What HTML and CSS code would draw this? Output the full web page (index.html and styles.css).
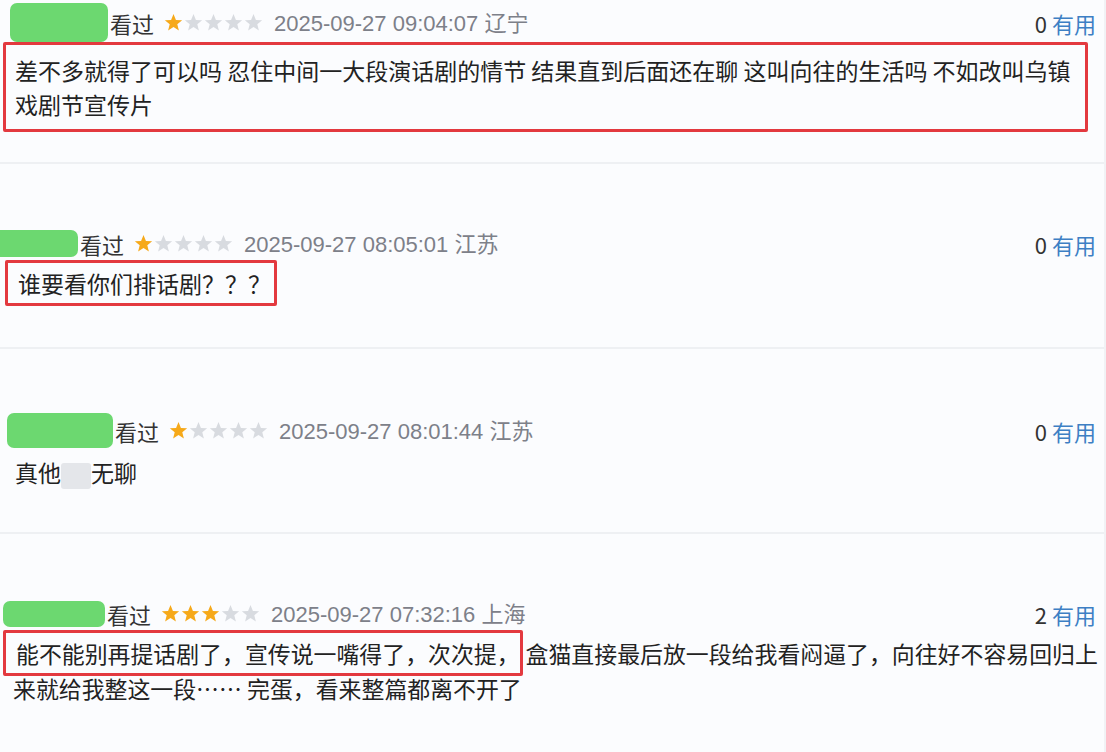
FILE: index.html
```html
<!DOCTYPE html>
<html lang="zh-CN">

<head>
    <meta charset="UTF-8">
    <meta name="viewport" content="width=device-width, initial-scale=1.0">
    <title>短评</title>
    <link rel="stylesheet" href="styles.css">
</head>

<body>
    <svg width="0" height="0" class="defs">
        <defs>
            <polygon id="star" points="9,1 11.3,6.6 17.2,6.9 12.6,10.7 14.1,16.5 9,13.3 3.9,16.5 5.4,10.7 0.8,6.9 6.7,6.6" />
        </defs>
    </svg>

    <div class="comments">
        <div class="comment comment-first">
            <div class="comment-head">
                <span class="user user-1"></span>
                <span class="seen">看过</span>
                <span class="stars">
                    <svg class="star on" viewBox="0 0 18 18"><use href="#star" /></svg>
                    <svg class="star" viewBox="0 0 18 18"><use href="#star" /></svg>
                    <svg class="star" viewBox="0 0 18 18"><use href="#star" /></svg>
                    <svg class="star" viewBox="0 0 18 18"><use href="#star" /></svg>
                    <svg class="star" viewBox="0 0 18 18"><use href="#star" /></svg>
                </span>
                <span class="time">2025-09-27 09:04:07 <span class="place">辽宁</span></span>
                <span class="votes"><span class="count">0</span> <a href="#">有用</a></span>
            </div>
            <p class="comment-text mark mark-block">差不多就得了可以吗 忍住中间一大段演话剧的情节 结果直到后面还在聊 这叫向往的生活吗 不如改叫乌镇戏剧节宣传片</p>
        </div>

        <div class="comment">
            <div class="comment-head">
                <span class="user user-2"></span>
                <span class="seen">看过</span>
                <span class="stars">
                    <svg class="star on" viewBox="0 0 18 18"><use href="#star" /></svg>
                    <svg class="star" viewBox="0 0 18 18"><use href="#star" /></svg>
                    <svg class="star" viewBox="0 0 18 18"><use href="#star" /></svg>
                    <svg class="star" viewBox="0 0 18 18"><use href="#star" /></svg>
                    <svg class="star" viewBox="0 0 18 18"><use href="#star" /></svg>
                </span>
                <span class="time">2025-09-27 08:05:01 <span class="place">江苏</span></span>
                <span class="votes"><span class="count">0</span> <a href="#">有用</a></span>
            </div>
            <p class="comment-text"><span class="mark">谁要看你们排话剧？？？</span></p>
        </div>

        <div class="comment">
            <div class="comment-head">
                <span class="user user-3"></span>
                <span class="seen">看过</span>
                <span class="stars">
                    <svg class="star on" viewBox="0 0 18 18"><use href="#star" /></svg>
                    <svg class="star" viewBox="0 0 18 18"><use href="#star" /></svg>
                    <svg class="star" viewBox="0 0 18 18"><use href="#star" /></svg>
                    <svg class="star" viewBox="0 0 18 18"><use href="#star" /></svg>
                    <svg class="star" viewBox="0 0 18 18"><use href="#star" /></svg>
                </span>
                <span class="time">2025-09-27 08:01:44 <span class="place">江苏</span></span>
                <span class="votes"><span class="count">0</span> <a href="#">有用</a></span>
            </div>
            <p class="comment-text">真他<span class="blur"></span>无聊</p>
        </div>

        <div class="comment comment-last">
            <div class="comment-head">
                <span class="user user-4"></span>
                <span class="seen">看过</span>
                <span class="stars">
                    <svg class="star on" viewBox="0 0 18 18"><use href="#star" /></svg>
                    <svg class="star on" viewBox="0 0 18 18"><use href="#star" /></svg>
                    <svg class="star on" viewBox="0 0 18 18"><use href="#star" /></svg>
                    <svg class="star" viewBox="0 0 18 18"><use href="#star" /></svg>
                    <svg class="star" viewBox="0 0 18 18"><use href="#star" /></svg>
                </span>
                <span class="time">2025-09-27 07:32:16 <span class="place">上海</span></span>
                <span class="votes"><span class="count">2</span> <a href="#">有用</a></span>
            </div>
            <p class="comment-text comment-long"><span class="mark mark-tight">能不能别再提话剧了，宣传说一嘴得了，次次提，</span>盒猫直接最后放一段给我看闷逼了，向往好不容易回归上来就给我整这一段…… 完蛋，看来整篇都离不开了</p>
        </div>
    </div>
</body>

</html>
```

FILE: styles.css
```css
body {
    margin: 0;
    padding: 0;
    background-color: #fbfcfe;
    font-family: "Noto Sans CJK SC", "Noto Sans", sans-serif;
    color: #222;
}

.defs {
    position: absolute;
}

.comments {
    border-right: 2px solid #f1f2f5;
    height: 752px;
    overflow: hidden;
}

.comment {
    height: 185px;
    padding-top: 64px;
    box-sizing: border-box;
    border-bottom: 2px solid #eef0f3;
}

.comment-first {
    height: 164px;
    padding-top: 3px;
}

.comment-last {
    border-bottom: none;
}

.comment-head {
    display: flex;
    align-items: center;
    padding-right: 8px;
    font-size: 22px;
    line-height: 28px;
}

.user {
    display: inline-block;
    background-color: #6cd870;
    border-radius: 7px;
    margin-right: 2px;
}

.user-1 {
    width: 98px;
    height: 39px;
    margin-left: 10px;
}

.user-2 {
    width: 78px;
    height: 27px;
    margin-left: 0;
    border-radius: 0 7px 7px 0;
}

.user-3 {
    width: 106px;
    height: 35px;
    margin-left: 7px;
}

.user-4 {
    width: 102px;
    height: 26px;
    margin-left: 3px;
}

.seen {
    color: #333;
}

.stars {
    display: flex;
    gap: 1px;
    margin-left: 10px;
}

.star {
    width: 19px;
    height: 19px;
    fill: #d8dbe0;
}

.star.on {
    fill: #f6a91a;
}

.time {
    margin-left: 11px;
    color: #7d8089;
    font-family: "Liberation Sans", Arial, sans-serif;
}

.place {
    font-family: "Noto Sans CJK SC", sans-serif;
}

.votes {
    margin-left: auto;
    color: #333;
}

.votes a {
    color: #3d7fc4;
    text-decoration: none;
}

.comment-text {
    margin: 7px 0 0;
    padding: 0 6px 0 15px;
    font-size: 23px;
    line-height: 34px;
}

.comment-long {
    padding: 0 2px 0 13px;
    font-size: 22.9px;
    line-height: 35px;
}

.mark {
    border: 3px solid #e3393f;
    border-radius: 2px;
    padding: 3px 3px 3px 10px;
    margin-left: -10px;
}

.mark-tight {
    padding-right: 0;
    margin-right: 3px;
}

.mark-block {
    margin: 0 16px 0 3px;
    padding: 8px 10px 8px 9px;
}

.blur {
    display: inline-block;
    width: 30px;
    height: 26px;
    vertical-align: middle;
    background-color: #e4e6ea;
    border-radius: 3px;
}
```
